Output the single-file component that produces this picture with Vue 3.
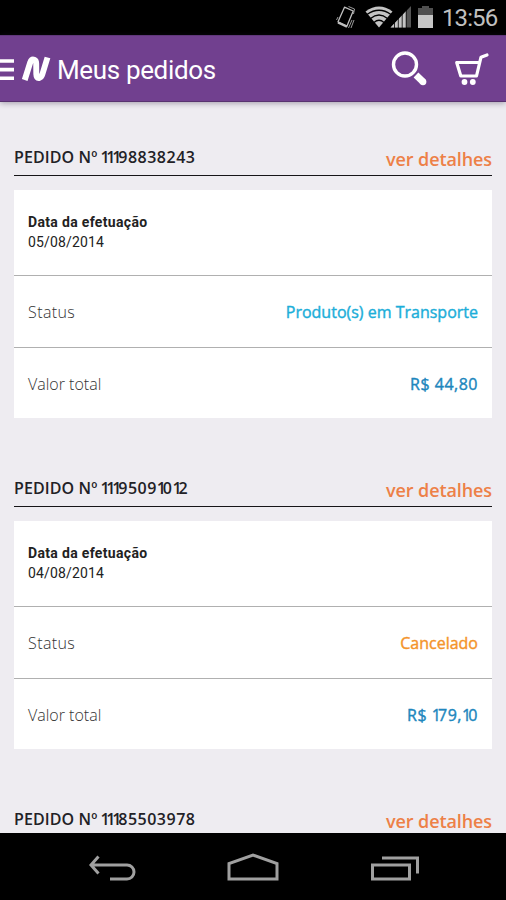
<script setup>
const orders = [
  { id: '11198838243', date: '05/08/2014', status: 'Produto(s) em Transporte', kind: 'transit', total: '44,80' },
  { id: '11195091012', date: '04/08/2014', status: 'Cancelado', kind: 'cancelled', total: '179,10' },
  { id: '11185503978', date: '', status: '', kind: 'transit', total: '' },
]

// Runs of the narrow digit 1 are separated so they can be set tighter.
const runs = (text) => text.match(/1+|[^1]+/g) || []
</script>

<template>
  <div class="screen">
    <div class="status-bar">
      <svg class="status-icons" width="106" height="35" viewBox="0 0 106 35">
        <g fill="none" stroke="#c0c0c0" stroke-width="1.3">
          <path d="M9.500 7.200 L18.200 11 L12 26 L3 21.800 Z" stroke-linejoin="round" />
          <path d="M3 22.500 L12 26.700" stroke-width="2.200" />
          <path d="M1.500 20 L3 17M13.500 28 L17 20M16 28 L19 20M13.500 6.500 L19.500 9 L18.500 14" stroke-width="0.800" />
        </g>
        <path d="M30.500 11.500 Q44 1.500 57.500 11.500 L44 27.500 Z" fill="#c4c4c4" />
        <g fill="none" stroke="#000" stroke-width="1.3">
          <path d="M32 14.500 Q44 6 56 14.500M35.500 18.500 Q44 11.500 52.500 18.500M39 22.500 Q44 18 49 22.500" />
        </g>
        <path d="M76 6 V27.500 H55.500 Z" fill="#555" />
        <path d="M71 11.300 V27.500 H55.500 Z" fill="#c4c4c4" />
        <path d="M59.500 10V28M63.300 8V28M67.200 7V28M71.200 6V28" stroke="#000" stroke-width="0.800" />
      </svg>
      <svg class="battery" width="15" height="35" viewBox="0 0 15 35">
        <path d="M0 8H4V6H11V8H15V15H0Z" fill="#505050" />
        <path d="M0 15H15V28H0Z" fill="#c6c6c6" />
      </svg>
      <span class="clock">13:56</span>
    </div>

    <header class="app-bar">
      <svg class="menu" width="14" height="67" viewBox="0 0 14 67">
        <path d="M0 26H14M0 34.600H14M0 43.200H14" stroke="#fff" stroke-width="3.600" />
      </svg>
      <svg class="logo" width="30" height="67" viewBox="0 0 30 67">
        <path d="M3.700 45 L9.200 27.500 Q10.500 23.800 13.300 24.700 Q15.200 25.400 15.200 28.500 L15.300 39 Q15.500 43.500 18.100 43 Q20.400 42.500 21.300 39.500 L26.500 22.500" fill="none" stroke="#fff" stroke-width="5.900" />
      </svg>
      <h1>Meus pedidos</h1>
      <svg class="search" width="36" height="67" viewBox="0 0 36 67">
        <circle cx="14" cy="29.500" r="11.500" fill="none" stroke="#fff" stroke-width="3.400" />
        <path d="M25 40 L32 46.800" stroke="#fff" stroke-width="6.800" />
        <circle cx="32" cy="46.800" r="3.400" fill="#fff" />
      </svg>
      <svg class="cart" width="36" height="67" viewBox="0 0 36 67">
        <path d="M33 20 L27 22.200 L22.500 41 H6.800 L2.700 27.500 H25" fill="none" stroke="#fff" stroke-width="3.200" stroke-linejoin="round" stroke-linecap="round" />
        <circle cx="10.500" cy="47" r="2.900" fill="#fff" />
        <circle cx="18.800" cy="47" r="2.900" fill="#fff" />
      </svg>
    </header>

    <main class="orders">
      <section v-for="order in orders" :key="order.id" class="order">
        <div class="order-head">
          <h2><span class="label">PEDIDO Nº</span><span class="number"><span v-for="(run, i) in runs(order.id)" :key="i" :class="{ ones: run[0] === '1' }">{{ run }}</span></span></h2>
          <a class="details">ver detalhes</a>
        </div>
        <div v-if="order.date" class="card">
          <div class="date-row">
            <strong>Data da efetuação</strong>
            <span>{{ order.date }}</span>
          </div>
          <div class="row">
            <span class="key status-key">Status</span>
            <span class="value" :class="order.kind">{{ order.status }}</span>
          </div>
          <div class="row">
            <span class="key">Valor total</span>
            <span class="value price">R$ <span v-for="(run, i) in runs(order.total)" :key="i" :class="{ ones: run[0] === '1' }">{{ run }}</span></span>
          </div>
        </div>
      </section>
    </main>

    <nav class="nav-bar">
      <svg width="506" height="67" viewBox="0 0 506 67">
        <g fill="none" stroke="#a0a0a0" stroke-width="3">
          <path d="M98.500 23.500 L91 32 L98.500 40.500M91.500 32H127A7 7 0 0 1 127 46H110" />
          <path d="M229 46V30.500L253 22L277 30.500V46Z" />
          <path d="M372.500 32H409.500V46H372.500ZM382 25H417.500V40.500" />
        </g>
      </svg>
    </nav>
  </div>
</template>

<style>
body {
  margin: 0;
  overflow: hidden;
}
</style>

<style scoped>
.screen {
  width: 506px;
  height: 900px;
  display: flex;
  flex-direction: column;
  background: #eeecf1;
  font-family: "Open Sans", sans-serif;
  overflow: hidden;
}
.status-bar {
  height: 35px;
  flex: none;
  background: #000;
  display: flex;
  padding-left: 335px;
}
.status-icons,
.battery {
  flex: none;
}
.battery {
  margin-left: -23px;
}
.clock {
  margin-left: 9px;
  font: 24px/37px Roboto, sans-serif;
  letter-spacing: -0.9px;
  color: #c0c0c0;
}
.app-bar {
  height: 67px;
  flex: none;
  box-sizing: border-box;
  display: flex;
  background: #71408f;
  box-shadow: inset 0 -1px #58326f, inset 0 1px #60377b, 0 1px 6px rgba(40, 30, 60, 0.4);
  z-index: 1;
}
.app-bar svg {
  flex: none;
}
.logo {
  margin-left: 7px;
}
h1 {
  margin: 0 0 0 6px;
  width: 334px;
  font: 26px/70px Roboto, sans-serif;
  letter-spacing: -0.35px;
  color: #fff;
  white-space: nowrap;
}
.cart {
  margin-left: 27px;
}
.orders {
  flex: 1;
  min-height: 0;
  overflow: hidden;
  padding: 39px 14px 0;
}
.order {
  height: 331px;
}
.order-head {
  height: 35px;
  box-sizing: border-box;
  border-bottom: 1px solid #161518;
  display: flex;
  justify-content: space-between;
}
h2 {
  margin: 0;
  display: flex;
  gap: 3px;
  font-size: 16px;
  line-height: 33px;
  font-weight: 600;
  color: #222126;
}
.label {
  letter-spacing: 0.1px;
}
.number {
  letter-spacing: 0.5px;
}
.ones {
  letter-spacing: -3.2px;
}
.details {
  font-size: 18px;
  line-height: 36px;
  font-weight: 600;
  letter-spacing: -0.1px;
  color: #ed8047;
}
.card {
  margin-top: 14px;
  height: 228px;
  background: #fff;
  display: flex;
  flex-direction: column;
}
.date-row {
  height: 86px;
  box-sizing: border-box;
  padding: 22px 14px 0;
  display: flex;
  flex-direction: column;
  font: 14px/20px Roboto, sans-serif;
  letter-spacing: 0.15px;
  color: #222;
  border-bottom: 1px solid #b0b0b0;
}
.date-row strong {
  letter-spacing: 0.33px;
}
.row {
  height: 72px;
  box-sizing: border-box;
  padding: 0 14px;
  display: flex;
  justify-content: space-between;
  font-size: 16px;
  line-height: 73px;
  border-bottom: 1px solid #b0b0b0;
}
.row:last-child {
  height: 70px;
  border: 0;
}
.key {
  font-weight: 300;
  color: #333;
}
.status-key {
  letter-spacing: 0.4px;
}
.value {
  font-weight: 400;
  -webkit-text-stroke: 0.4px currentColor;
}
.transit {
  color: #1caed9;
}
.cancelled {
  color: #f4942a;
}
.price {
  letter-spacing: 0.5px;
  color: #2086bd;
}
.price .ones {
  letter-spacing: -2.8px;
}
.nav-bar {
  height: 67px;
  flex: none;
  background: #000;
}
.nav-bar svg {
  display: block;
}
</style>
